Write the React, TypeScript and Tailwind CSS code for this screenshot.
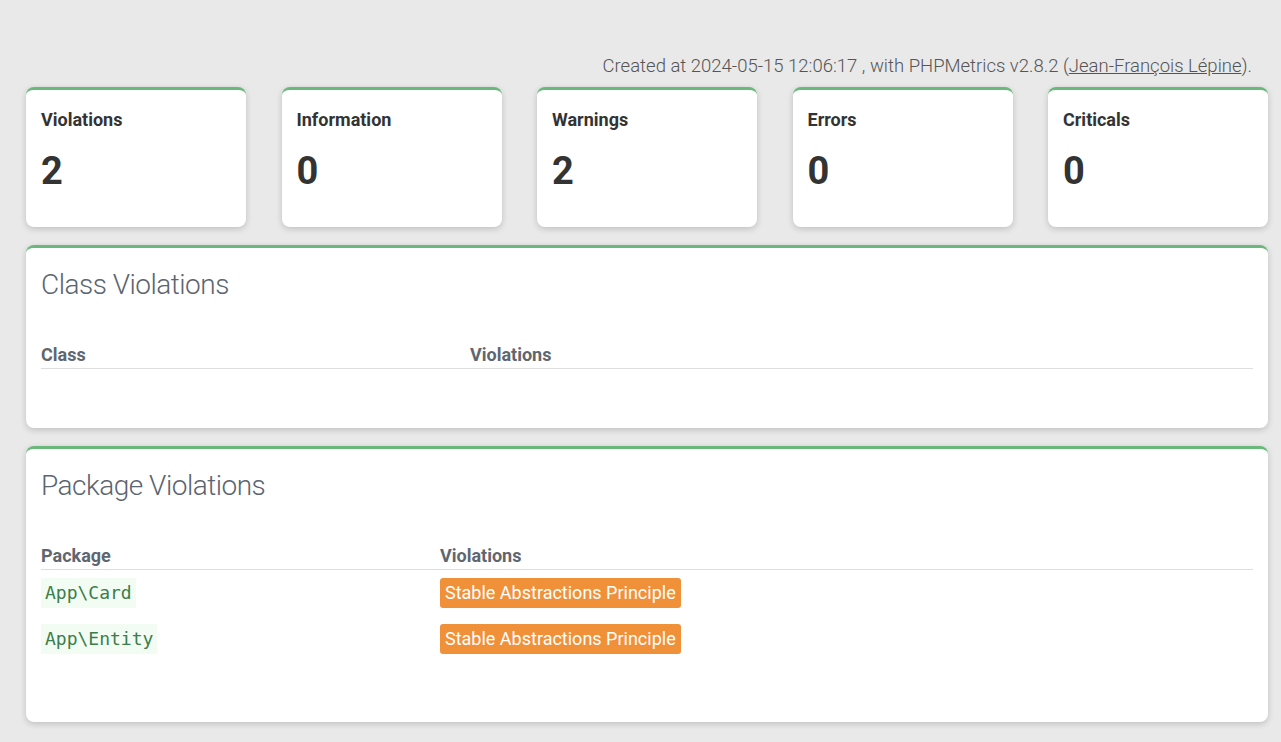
const STATS = [
  { label: 'Violations', value: 2 },
  { label: 'Information', value: 0 },
  { label: 'Warnings', value: 2 },
  { label: 'Errors', value: 0 },
  { label: 'Criticals', value: 0 },
];

const PACKAGES = ['App\\Card', 'App\\Entity'];

function Panel({ title, children, className = '' }: { title: string; children: React.ReactNode; className?: string }) {
  return (
    <section
      className={`bg-white rounded-lg border-t-[3px] border-[#68b97a] shadow-[0_2px_6px_rgba(0,0,0,0.18)] px-[15px] ${className}`}
    >
      <h2 className="text-[28px] font-light text-[#5b6470] tracking-[-0.5px] leading-[34px] pt-[20px]">{title}</h2>
      {children}
    </section>
  );
}

export default function App() {
  return (
    <div className="min-h-screen bg-[#e9e9e9] pl-[26px] pr-[13px] pt-[54px] pb-[20px] font-['Roboto',sans-serif] text-[#333]">
      <p className="text-right text-[18.5px] font-light text-[#555] pr-[16px] leading-[24px]">
        Created at 2024-05-15 12:06:17 , with PHPMetrics v2.8.2 (<span className="underline">Jean-François Lépine</span>).
      </p>

      {/* Summary cards */}
      <div className="grid grid-cols-5 gap-[35.5px] mt-[9px]">
        {STATS.map(({ label, value }) => (
          <div
            key={label}
            className="bg-white h-[140px] rounded-lg border-t-[3px] border-[#68b97a] shadow-[0_2px_6px_rgba(0,0,0,0.18)] px-[15px] pt-[19px]"
          >
            <h3 className="text-[18px] font-bold leading-[22px] text-[#333]">{label}</h3>
            <div className="text-[38px] font-bold leading-[46px] mt-[17px] text-[#333]">{value}</div>
          </div>
        ))}
      </div>

      {/* Class violations */}
      <Panel title="Class Violations" className="mt-[18px] h-[183px]">
        <table className="w-full mt-[42px] text-[18px]">
          <thead>
            <tr className="border-b border-[#dedede] text-left text-[#5f6670]">
              <th className="w-[429px] font-bold pb-[2px] leading-[22px]">Class</th>
              <th className="font-bold pb-[2px] leading-[22px]">Violations</th>
            </tr>
          </thead>
          <tbody />
        </table>
      </Panel>

      {/* Package violations */}
      <Panel title="Package Violations" className="mt-[18px] h-[276px]">
        <table className="w-full mt-[42px] text-[18px]">
          <thead>
            <tr className="border-b border-[#dedede] text-left text-[#5f6670]">
              <th className="w-[399px] font-bold pb-[2px] leading-[22px]">Package</th>
              <th className="font-bold pb-[2px] leading-[22px]">Violations</th>
            </tr>
          </thead>
          <tbody>
            {PACKAGES.map((pkg, i) => (
              <tr key={pkg}>
                <td className={`${i === 0 ? 'pt-[8px]' : 'pt-[16px]'} align-top`}>
                  <code className="inline-block bg-[#f2fcf2] text-[#3b7d4c] font-['DejaVu_Sans_Mono',monospace] text-[18px] leading-[30px] px-[4px]">
                    {pkg}
                  </code>
                </td>
                <td className={`${i === 0 ? 'pt-[8px]' : 'pt-[16px]'} align-top`}>
                  <span className="inline-block bg-[#f0913a] text-white rounded-[3px] text-[18px] leading-[30px] px-[5px]">
                    Stable Abstractions Principle
                  </span>
                </td>
              </tr>
            ))}
          </tbody>
        </table>
      </Panel>
    </div>
  );
}
